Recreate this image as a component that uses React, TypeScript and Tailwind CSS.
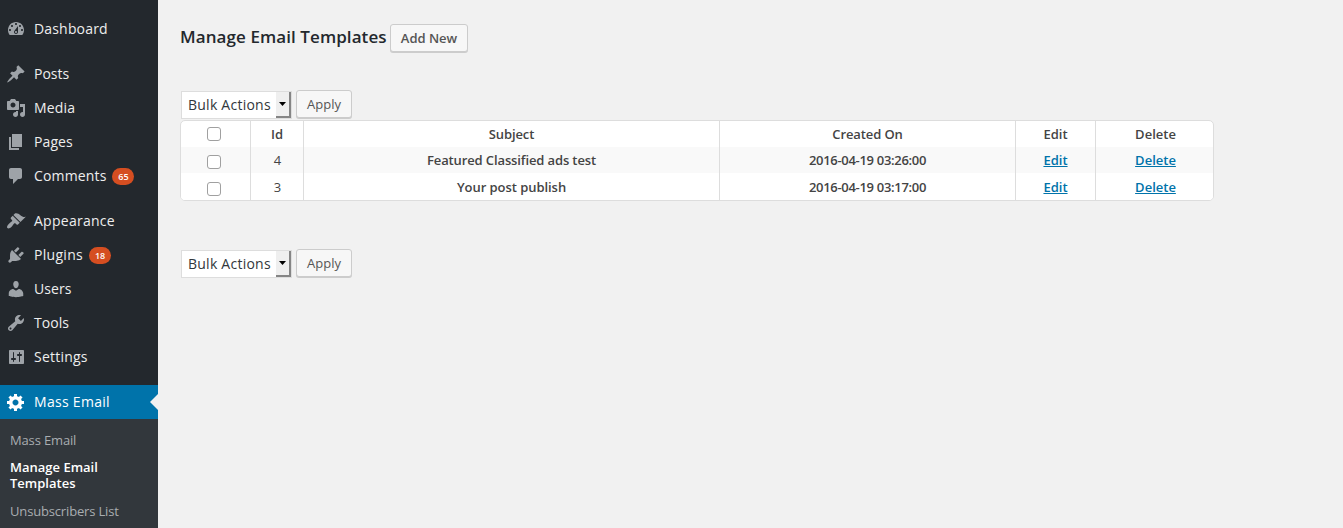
import React from "react";

const icons = {
  dashboard:
    "M3.76 16h12.48c1.1-1.37 1.76-3.11 1.76-5 0-4.42-3.58-8-8-8s-8 3.58-8 8c0 1.89.66 3.63 1.76 5zM10 4c.55 0 1 .45 1 1s-.45 1-1 1-1-.45-1-1 .45-1 1-1zM6 6c.55 0 1 .45 1 1s-.45 1-1 1-1-.45-1-1 .45-1 1-1zm8 0c.55 0 1 .45 1 1s-.45 1-1 1-1-.45-1-1 .45-1 1-1zm-5.37 5.55L12 7v6c0 1.1-.9 2-2 2s-2-.9-2-2c0-.57.24-1.08.63-1.45zM4 10c.55 0 1 .45 1 1s-.45 1-1 1-1-.45-1-1 .45-1 1-1zm12 0c.55 0 1 .45 1 1s-.45 1-1 1-1-.45-1-1 .45-1 1-1zm-5 3c0-.55-.45-1-1-1s-1 .45-1 1 .45 1 1 1 1-.45 1-1z",
  posts:
    "M10.44 3.02l1.82-1.82 6.36 6.35-1.83 1.82c-1.05-.68-2.48-.57-3.41.36l-.75.75c-.92.93-1.04 2.35-.35 3.41l-1.83 1.82-2.41-2.41-2.8 2.79c-.42.42-3.38 2.71-3.8 2.29s1.86-3.39 2.28-3.81l2.79-2.79L4.1 9.36l1.83-1.82c1.05.69 2.48.57 3.4-.36l.75-.75c.93-.92 1.05-2.35.36-3.41z",
  media:
    "M13 11V4c0-.55-.45-1-1-1h-1.67L9 1H5L3.67 3H2c-.55 0-1 .45-1 1v7c0 .55.45 1 1 1h10c.55 0 1-.45 1-1zM7 4.5c1.38 0 2.5 1.12 2.5 2.5S8.38 9.5 7 9.5 4.5 8.38 4.5 7 5.62 4.5 7 4.5zM14 6h5v10.5c0 1.38-1.12 2.5-2.5 2.5S14 17.88 14 16.5s1.12-2.5 2.5-2.5c.17 0 .34.02.5.05V9h-3V6zm-4 8.05V13h2v3.5c0 1.38-1.12 2.5-2.5 2.5S7 17.88 7 16.5 8.12 14 9.5 14c.17 0 .34.02.5.05z",
  pages: "M6 15V2h10v13H6zm-1 1h8v2H3V5h2v11z",
  comments:
    "M5 2h9c1.1 0 2 .9 2 2v7c0 1.1-.9 2-2 2h-2l-5 5v-5H5c-1.1 0-2-.9-2-2V4c0-1.1.9-2 2-2z",
  appearance:
    "M14.48 11.06L7.41 3.99l1.5-1.5c.5-.56 2.3-.47 3.51.32 1.21.8 1.43 1.28 2.91 2.1 1.18.64 2.45 1.26 4.45.85zm-.71.71L6.7 4.7 4.93 6.47c-.39.39-.39 1.02 0 1.41l1.06 1.06c.39.39.39 1.03 0 1.42-.6.6-1.43 1.11-2.21 1.69-.35.26-.7.53-1.01.84C1.43 14.23.4 16.08 1.4 17.07c.99 1 2.84-.03 4.18-1.36.31-.31.58-.66.85-1.02.57-.78 1.08-1.61 1.69-2.21.39-.39 1.02-.39 1.41 0l1.06 1.06c.39.39 1.02.39 1.41 0z",
  plugins:
    "M13.11 4.36L9.87 7.6 8 5.73l3.24-3.24c.35-.34 1.05-.2 1.56.32.52.51.66 1.21.31 1.55zm-8 1.77l.91-1.12 9.01 9.01-1.19.84c-.71.71-2.63 1.16-3.82 1.16H6.14L4.9 17.26c-.59.59-1.54.59-2.12 0-.59-.58-.59-1.53 0-2.12l1.24-1.24v-3.88c0-1.13.4-3.19 1.09-3.89zm7.26 3.97l3.24-3.24c.34-.35 1.04-.21 1.55.31.52.51.66 1.21.31 1.55l-3.24 3.25z",
  users:
    "M10 9.25c-2.27 0-2.73-3.44-2.73-3.44C7 4.02 7.82 2 9.97 2c2.16 0 2.98 2.02 2.71 3.81 0 0-.41 3.44-2.68 3.44zm0 2.57L12.72 10c2.39 0 4.52 2.33 4.52 4.53v2.49s-3.65 1.13-7.24 1.13c-3.65 0-7.24-1.13-7.24-1.13v-2.49c0-2.25 1.94-4.48 4.47-4.48z",
  tools:
    "M16.68 9.77c-1.34 1.34-3.3 1.67-4.95.99l-5.41 6.52c-.99.99-2.59.99-3.58 0s-.99-2.59 0-3.57l6.52-5.42c-.68-1.65-.35-3.61.99-4.95 1.28-1.28 3.12-1.62 4.72-1.06l-2.89 2.89 2.82 2.82 2.86-2.87c.53 1.58.18 3.39-1.08 4.65zM3.81 16.21c.4.39 1.04.39 1.43 0 .4-.4.4-1.04 0-1.43-.39-.4-1.03-.4-1.43 0-.39.39-.39 1.03 0 1.43z",
  settings:
    "M18 16V4c0-.55-.45-1-1-1H4c-.55 0-1 .45-1 1v12c0 .55.45 1 1 1h13c.55 0 1-.45 1-1zM8 11h1c.55 0 1 .45 1 1s-.45 1-1 1H8v1.5c0 .28-.22.5-.5.5s-.5-.22-.5-.5V13H6c-.55 0-1-.45-1-1s.45-1 1-1h1V5.5c0-.28.22-.5.5-.5s.5.22.5.5V11zm5-2h-1c-.55 0-1-.45-1-1s.45-1 1-1h1V5.5c0-.28.22-.5.5-.5s.5.22.5.5V7h1c.55 0 1 .45 1 1s-.45 1-1 1h-1v5.5c0 .28-.22.5-.5.5s-.5-.22-.5-.5V9z",
  gear:
    "M18 12h-2.18c-.17.7-.44 1.35-.81 1.93l1.54 1.54-2.1 2.1-1.54-1.54c-.58.36-1.23.63-1.91.79V19H8v-2.18c-.68-.16-1.33-.43-1.91-.79l-1.54 1.54-2.12-2.12 1.54-1.54c-.36-.58-.63-1.23-.79-1.91H1V9.03h2.17c.16-.7.44-1.35.8-1.94L2.43 5.55l2.1-2.1 1.54 1.54c.58-.37 1.24-.64 1.93-.81V2h3v2.18c.68.16 1.33.43 1.91.79l1.54-1.54 2.12 2.12-1.54 1.54c.36.59.64 1.24.8 1.94H18V12zm-8.5 1.5c1.66 0 3-1.34 3-3s-1.34-3-3-3-3 1.34-3 3 1.34 3 3 3z",
};

type IconName = keyof typeof icons;
type Item = { icon: IconName; label: string; tracking: string; count?: number };

function Icon({ name }: { name: IconName }) {
  return (
    <svg viewBox="0 0 20 20" className="size-5 shrink-0" fill="currentColor" fillRule="evenodd">
      <path d={icons[name]} />
    </svg>
  );
}

function MenuItem({ icon, label, tracking, count }: Item) {
  return (
    <a className="flex h-[34px] items-center pl-1.5 text-[#9ea3a8]">
      <Icon name={icon} />
      <span className={`ml-2 text-sm text-[#eeeeee] ${tracking}`}>{label}</span>
      {count !== undefined && (
        <span className="ml-1.5 flex h-[17px] w-[22px] items-center justify-center rounded-full bg-[#d54e21] pt-px text-[9px] font-semibold text-white">
          {count}
        </span>
      )}
    </a>
  );
}

const groups: Item[][] = [
  [{ icon: "dashboard", label: "Dashboard", tracking: "tracking-[0.17px]" }],
  [
    { icon: "posts", label: "Posts", tracking: "tracking-normal" },
    { icon: "media", label: "Media", tracking: "tracking-[0.2px]" },
    { icon: "pages", label: "Pages", tracking: "tracking-[0.1px]" },
    { icon: "comments", label: "Comments", tracking: "tracking-[0.15px]", count: 65 },
  ],
  [
    { icon: "appearance", label: "Appearance", tracking: "tracking-[0.27px]" },
    { icon: "plugins", label: "Plugins", tracking: "tracking-[0.3px]", count: 18 },
    { icon: "users", label: "Users", tracking: "tracking-[0.05px]" },
    { icon: "tools", label: "Tools", tracking: "tracking-[0.05px]" },
    { icon: "settings", label: "Settings", tracking: "tracking-[0.22px]" },
  ],
];

function Sidebar() {
  return (
    <nav className="flex w-[158px] shrink-0 flex-col bg-[#23282d] pt-3">
      <div className="flex flex-col gap-[11px]">
        {groups.map((group, i) => (
          <div key={i}>
            {group.map((item) => (
              <MenuItem key={item.label} {...item} />
            ))}
          </div>
        ))}
        <a className="relative flex h-[34px] items-center bg-[#0073aa] pl-1.5 text-white">
          <Icon name="gear" />
          <span className="ml-2 text-sm tracking-[0.3px]">Mass Email</span>
          <span className="absolute right-0 top-[9px] border-y-8 border-r-8 border-y-transparent border-r-[#f1f1f1]" />
        </a>
      </div>
      <div className="flex-1 bg-[#32373c] pl-2.5 pt-[13px] text-[13px] leading-4 text-[#a9adb1]">
        <a className="block tracking-[-0.15px]">Mass Email</a>
        <a className="mt-[11px] block w-[120px] font-semibold text-white">Manage Email Templates</a>
        <a className="mt-3 block tracking-[-0.16px]">Unsubscribers List</a>
      </div>
    </nav>
  );
}

function BulkActions() {
  return (
    <div className="flex h-[29px] items-start pl-px">
      <div className="mt-px flex h-7 w-[111px] items-stretch border border-[#dddddd] bg-white">
        <span className="flex-1 whitespace-nowrap pl-1.5 text-sm leading-[26px] tracking-[0.24px] text-[#32373c]">Bulk Actions</span>
        <span className="flex w-[15px] shrink-0 items-center justify-center border-b-2 border-r-2 border-[#858585] bg-[#efefef]">
          <svg width="7" height="4" viewBox="0 0 7 4">
            <path d="M0 0h7L3.5 4z" fill="#000" />
          </svg>
        </span>
      </div>
      <button className="ml-1 h-7 w-14 rounded-[3px] border border-[#cccccc] bg-[#f7f7f7] pt-px text-[13px] text-[#555555] shadow-[0_1px_0_#cccccc]">
        Apply
      </button>
    </div>
  );
}

function Checkbox() {
  return <input type="checkbox" className="block size-3.5 appearance-none rounded-[3px] border border-[#a0a0a0] bg-white" />;
}

const columns = "grid grid-cols-[70px_53px_416px_296px_80px_117px]";
const cell = "flex items-center justify-center";
const line = "border-r border-[#dddddd]";

const rows = [
  { id: 4, subject: "Featured Classified ads test", tracking: "tracking-[-0.12px]", created: "2016-04-19 03:26:00", tone: "h-[26px] bg-[#f9f9f9]", box: "pt-1" },
  { id: 3, subject: "Your post publish", tracking: "tracking-[-0.05px]", created: "2016-04-19 03:17:00", tone: "h-[27px] bg-white", box: "pt-1" },
];

function TemplateTable() {
  return (
    <div className="w-[1034px] overflow-hidden rounded-[5px] border border-[#dddddd] bg-white text-[13px] font-semibold text-[#444444]">
      <div className={`${columns} h-[26px]`}>
        <div className={`${cell} ${line} pr-1`}><Checkbox /></div>
        <div className={`${cell} ${line} pt-0.5`}>Id</div>
        <div className={`${cell} ${line} pt-0.5 tracking-[-0.1px]`}>Subject</div>
        <div className={`${cell} ${line} pt-0.5 tracking-[-0.1px]`}>Created On</div>
        <div className={`${cell} ${line} pt-0.5`}>Edit</div>
        <div className={`${cell} pl-0.5 pt-0.5`}>Delete</div>
      </div>
      {rows.map((row) => (
        <div key={row.id} className={`${columns} ${row.tone}`}>
          <div className={`${cell} ${line} ${row.box} pr-1`}><Checkbox /></div>
          <div className={`${cell} ${line} pl-px pt-0.5 font-normal`}>{row.id}</div>
          <div className={`${cell} ${line} pt-0.5 ${row.tracking}`}>{row.subject}</div>
          <div className={`${cell} ${line} pt-0.5 tracking-[-0.3px]`}>{row.created}</div>
          <div className={`${cell} ${line} pt-0.5`}><a className="text-[#0073aa] underline">Edit</a></div>
          <div className={`${cell} pl-0.5 pt-0.5`}><a className="text-[#0073aa] underline">Delete</a></div>
        </div>
      ))}
    </div>
  );
}

export default function App() {
  return (
    <div className="flex h-[528px] w-[1343px] overflow-hidden bg-[#f1f1f1] font-['Open_Sans',sans-serif]">
      <Sidebar />
      <main className="flex flex-1 flex-col items-start pl-[22px] pt-6">
        <div className="flex items-start gap-1">
          <h2 className="w-[206px] whitespace-nowrap text-[17px] font-semibold leading-[26px] tracking-[0.08px] text-[#23282d]">
            Manage Email Templates
          </h2>
          <button className="h-7 w-[78px] rounded-[3px] border border-[#cccccc] bg-[#f7f7f7] pt-px text-[13px] font-semibold text-[#555555] shadow-[0_1px_0_#cccccc]">
            Add New
          </button>
        </div>
        <div className="mt-[38px]"><BulkActions /></div>
        <div className="mt-px"><TemplateTable /></div>
        <div className="mt-12"><BulkActions /></div>
      </main>
    </div>
  );
}
